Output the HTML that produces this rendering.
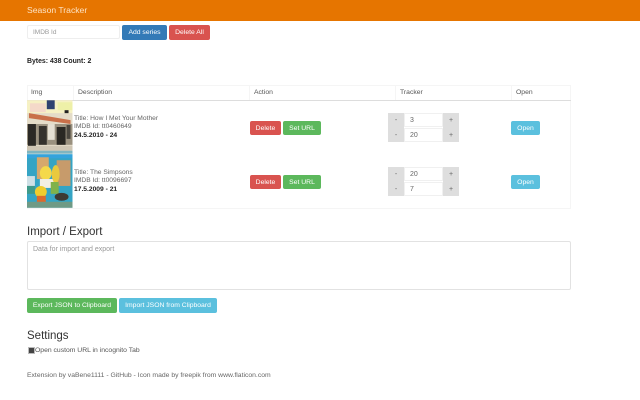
<!DOCTYPE html>
<html><head><meta charset="utf-8"><style>
html,body{margin:0;padding:0;background:#fff}
body{width:640px;height:400px;position:relative;overflow:hidden;font-family:"Liberation Sans",sans-serif;font-size:6.8px;color:#333}
.a{position:absolute;white-space:nowrap}
.b{position:absolute;box-sizing:border-box;color:#fff;text-align:center;border-radius:2px;font-size:6.8px;height:14.5px;line-height:16.5px;overflow:hidden;white-space:nowrap}
.bl{background:#337ab7}.r{background:#d9534f}.g{background:#5cb85c}.c{background:#5bc0de}
.gr{position:absolute;background:#dedede;color:#666;text-align:center;line-height:16px;font-size:7px;height:14.5px;overflow:hidden}
.in{position:absolute;background:#fff;color:#666;height:14px;line-height:14.5px;box-sizing:border-box;padding-left:5px;border:1px solid #f0f0f0;font-size:7px}
.h{color:#555;font-size:6.8px}
.v{position:absolute;width:1px;background:#f5f5f5;top:85px;height:15px}
</style></head><body>
<div class="a" style="left:0;top:0;width:640px;height:20.5px;background:#e67500"></div>
<div class="a" style="left:27px;top:5px;font-size:8.6px;line-height:10px;color:#fde3c4">Season Tracker</div>
<div class="a" style="left:27px;top:25px;width:93px;height:14px;box-sizing:border-box;border:1px solid #eee;border-radius:2px;color:#999;padding-left:5px;line-height:13.5px;font-size:6.5px">IMDB Id</div>
<div class="b bl" style="left:122px;top:25px;width:45px">Add series</div>
<div class="b r" style="left:169px;top:25px;width:41px">Delete All</div>
<div class="a" style="left:27px;top:56.5px;font-weight:bold;font-size:6.9px;line-height:9px;color:#222">Bytes: 438 Count: 2</div>

<div class="a" style="left:27px;top:85px;width:544px;height:124px;box-sizing:border-box;border:1px solid #f5f5f5"></div>
<div class="a" style="left:27px;top:100px;width:544px;height:1px;background:#ddd"></div>
<div class="v" style="left:73px"></div><div class="v" style="left:249px"></div><div class="v" style="left:395px"></div><div class="v" style="left:511px"></div>
<div class="a h" style="left:31px;top:88px;line-height:9px">Img</div>
<div class="a h" style="left:78px;top:88px;line-height:9px">Description</div>
<div class="a h" style="left:254px;top:88px;line-height:9px">Action</div>
<div class="a h" style="left:400px;top:88px;line-height:9px">Tracker</div>
<div class="a h" style="left:516px;top:88px;line-height:9px">Open</div>

<svg class="a" style="left:27px;top:100px" width="45.5" height="54" viewBox="0 0 46 54">
<rect width="46" height="54" fill="#e4dcc8"/>
<rect width="46" height="13" fill="#f6f1c4"/>
<rect x="3" y="3" width="16" height="9" fill="#f4d9c9"/>
<rect x="20" y="0" width="8" height="9" fill="#2f4270"/>
<rect x="31" y="2" width="15" height="8" fill="#eef0a8"/>
<rect x="38" y="10" width="4" height="3" fill="#222"/>
<path d="M2 13 L44 20 L44 24 L2 18Z" fill="#c9704a"/>
<rect x="0" y="24" width="46" height="21" fill="#9a917f"/>
<rect x="1" y="24" width="8" height="24" fill="#2b2925"/>
<rect x="12" y="26" width="8" height="19" fill="#35322d"/>
<rect x="21" y="24" width="7" height="16" fill="#e5e0d3"/>
<rect x="30" y="27" width="9" height="18" fill="#2a2823"/>
<rect x="40" y="25" width="4" height="14" fill="#4a463e"/>
<rect x="0" y="46" width="46" height="5" fill="#cfc6b4"/>
<rect x="0" y="51" width="46" height="3" fill="#7fb5c0"/>
</svg>
<svg class="a" style="left:27px;top:154px" width="45.5" height="54" viewBox="0 0 46 54">
<rect width="46" height="54" fill="#35a4c4"/>
<rect x="0" y="0" width="46" height="4" fill="#34a3dc"/>
<rect x="10" y="3" width="12" height="22" fill="#d6a86c"/>
<rect x="30" y="6" width="14" height="26" fill="#c79b6b"/>
<rect x="0" y="22" width="8" height="10" fill="#cfe0e6"/>
<rect x="0" y="32" width="8" height="8" fill="#3f9a8a"/>
<ellipse cx="19" cy="19" rx="6" ry="7" fill="#f4d94a"/>
<rect x="13" y="25" width="14" height="9" fill="#f3efe4"/>
<ellipse cx="29" cy="20" rx="4" ry="9" fill="#e9c93d"/>
<ellipse cx="14" cy="38" rx="6" ry="6" fill="#f0cc2e"/>
<rect x="10" y="42" width="9" height="7" fill="#dc6a2c"/>
<rect x="24" y="28" width="8" height="12" fill="#7fb24b"/>
<ellipse cx="35" cy="43" rx="7" ry="4" fill="#3d3a34"/>
<rect x="0" y="48" width="46" height="6" fill="#6f9a85"/>
</svg>

<div class="a" style="left:74px;top:114.5px;line-height:8.8px;color:#666;font-size:6.7px">Title: How I Met Your Mother<br>IMDB Id: tt0460649<br><b style="color:#222">24.5.2010 - 24</b></div>
<div class="a" style="left:74px;top:168.5px;line-height:8.8px;color:#666;font-size:6.7px">Title: The Simpsons<br>IMDB Id: tt0096697<br><b style="color:#222">17.5.2009 - 21</b></div>

<div class="b r" style="left:250px;top:120.5px;width:31px">Delete</div>
<div class="b g" style="left:283px;top:120.5px;width:38px">Set URL</div>
<div class="b r" style="left:250px;top:174.5px;width:31px">Delete</div>
<div class="b g" style="left:283px;top:174.5px;width:38px">Set URL</div>
<div class="b c" style="left:511px;top:120.5px;width:29px">Open</div>
<div class="b c" style="left:511px;top:174.5px;width:29px">Open</div>

<div class="gr" style="left:388px;top:113px;width:16px">-</div>
<div class="in" style="left:404px;top:113px;width:39px">3</div>
<div class="gr" style="left:443px;top:113px;width:16px">+</div>
<div class="gr" style="left:388px;top:127.5px;width:16px">-</div>
<div class="in" style="left:404px;top:127.5px;width:39px">20</div>
<div class="gr" style="left:443px;top:127.5px;width:16px">+</div>

<div class="gr" style="left:388px;top:167px;width:16px">-</div>
<div class="in" style="left:404px;top:167px;width:39px">20</div>
<div class="gr" style="left:443px;top:167px;width:16px">+</div>
<div class="gr" style="left:388px;top:181.5px;width:16px">-</div>
<div class="in" style="left:404px;top:181.5px;width:39px">7</div>
<div class="gr" style="left:443px;top:181.5px;width:16px">+</div>

<div class="a" style="left:27px;top:225px;font-size:11.5px;line-height:14px;color:#333">Import / Export</div>
<div class="a" style="left:27px;top:241px;width:544px;height:49px;box-sizing:border-box;border:1px solid #e2e2e2;border-radius:2px;color:#999;padding:3px 5px;font-size:7px;line-height:9px">Data for import and export</div>
<div class="b g" style="left:27px;top:298px;width:90px">Export JSON to Clipboard</div>
<div class="b c" style="left:119px;top:298px;width:98px">Import JSON from Clipboard</div>

<div class="a" style="left:27px;top:329px;font-size:11.5px;line-height:14px;color:#333">Settings</div>
<div class="a" style="left:28px;top:347px;width:4.5px;height:4.5px;background:#444;border:.5px solid #bbb"></div>
<div class="a" style="left:35px;top:345.5px;line-height:9px;color:#555">Open custom URL in incognito Tab</div>
<div class="a" style="left:27px;top:371px;line-height:9px;color:#666;font-size:6.8px">Extension by vaBene1111 - GitHub - Icon made by freepik from www.flaticon.com</div>
</body></html>
